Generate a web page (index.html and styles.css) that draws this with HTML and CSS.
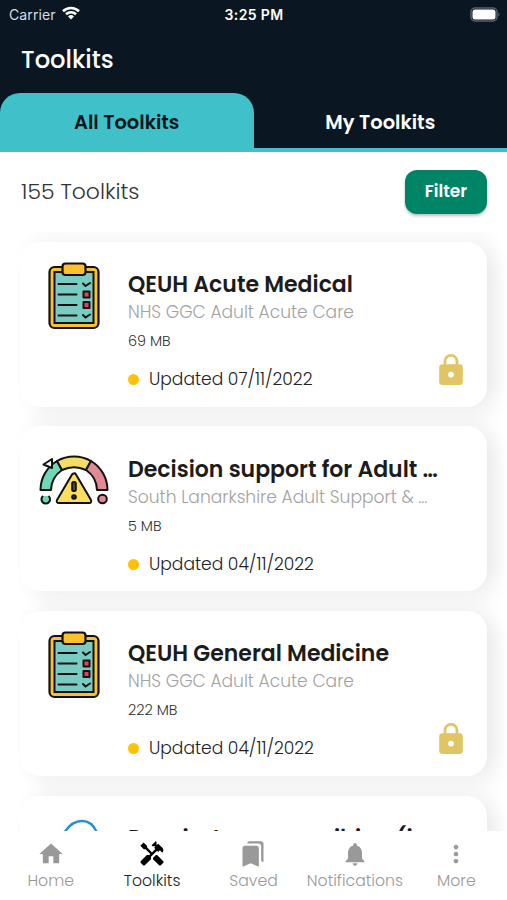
FILE: index.html
```html
<!DOCTYPE html>
<html lang="en">
<head>
    <meta charset="UTF-8">
    <meta name="viewport" content="width=device-width, initial-scale=1">
    <title>Toolkits</title>
    <link rel="stylesheet" href="styles.css">
</head>
<body>
    <!-- shared icons -->
    <svg class="symbols" width="0" height="0">
        <symbol id="clipboard" viewBox="0 0 52 68">
            <rect x="1.5" y="5" width="49" height="61" rx="5" fill="#fbc02d" stroke="#111" stroke-width="2.2"/>
            <path d="M6.5 10h39v51h-39z" fill="#7accc2" stroke="#111" stroke-width="2"/>
            <rect x="14.5" y="1.500" width="23" height="11.500" rx="3" fill="#fbc02d" stroke="#111" stroke-width="2.2"/>
            <path d="M10.500 22h18M10.500 32.500h18M10.500 43h18M10.500 53.500h18M35 21.500l2.500 2.500 4.500-3M35 53l2.500 2.500 4.500-3" fill="none" stroke="#111" stroke-width="2" stroke-linecap="round"/>
            <path d="M35.500 29.500h6v6h-6zM35.500 40h6v6h-6z" fill="#ef3c5c" stroke="#111" stroke-width="2" stroke-linejoin="round"/>
        </symbol>
        <symbol id="lock" viewBox="4 1 16 21">
            <path fill="#e1c564" d="M18 8h-1V6c0-2.760-2.240-5-5-5S7 3.240 7 6v2H6c-1.100 0-2 .9-2 2v10c0 1.100.9 2 2 2h12c1.100 0 2-.9 2-2V10c0-1.100-.9-2-2-2zm-6 9c-1.100 0-2-.9-2-2s.9-2 2-2 2 .9 2 2-.9 2-2 2zm3.100-9H8.900V6c0-1.710 1.390-3.100 3.100-3.100s3.100 1.390 3.100 3.100v2z"/>
        </symbol>
    </svg>
    <div class="app">
        <header class="header">
            <div class="status">
                <div class="carrier">
                    <span>Carrier</span>
                    <svg width="18" height="14" viewBox="0 0 18 14" fill="none" stroke="#fff" stroke-width="2.6">
                        <path d="M1 5.200a11.500 11.500 0 0 1 16 0M4 8.300a7.200 7.200 0 0 1 10 0"/>
                        <path d="M9 13.500l-3-3a4.300 4.300 0 0 1 6 0z" fill="#fff" stroke="none"/>
                    </svg>
                </div>
                <div class="time">3:25 PM</div>
                <svg class="battery" width="31" height="15" viewBox="0 0 31 15">
                    <rect x="1" y="1" width="26" height="13" rx="4" fill="none" stroke="#59626b" stroke-width="1.5"/>
                    <rect x="2.500" y="2.500" width="23" height="10" rx="2.500" fill="#fff"/>
                    <path d="M28.500 5.500q2 2 0 4z" fill="#68717a"/>
                </svg>
            </div>
            <h1>Toolkits</h1>
            <div class="tabs">
                <div class="tab active">All Toolkits</div>
                <div class="tab">My Toolkits</div>
            </div>
        </header>
        <div class="toolbar">
            <span class="count">155 Toolkits</span>
            <button class="filter">Filter</button>
        </div>
        <main class="list">
            <div class="card">
                <svg class="pic" width="52" height="68"><use href="#clipboard"/></svg>
                <div class="info">
                    <h2>QEUH Acute Medical</h2>
                    <p class="org">NHS GGC Adult Acute Care</p>
                    <p class="size">69 MB</p>
                    <p class="updated"><span class="dot"></span>Updated 07/11/2022</p>
                </div>
                <svg class="lock" width="24" height="31"><use href="#lock"/></svg>
            </div>
            <div class="card">
                <svg class="pic gauge" width="70" height="52" viewBox="0 0 70 52">
                    <g stroke="#111" stroke-width="2" stroke-linejoin="round">
                        <path d="M1.500 35A34 34 0 0 1 18 6l5 9A25 25 0 0 0 12 35z" fill="#6fd9b5"/>
                        <path d="M18 6A35 35 0 0 1 52 6l-5 9A28 28 0 0 0 23 15z" fill="#f5dc67"/>
                        <path d="M52 6A34 34 0 0 1 68.500 35H58A25 25 0 0 0 47 15z" fill="#e28a92"/>
                        <path d="M4.500 9.500l8.500-5.500v9z" fill="#fff"/>
                        <path d="M34.800 18.500Q36 17.500 37 19.500L52 45q1 3-2 3H20q-3 0-2-3l15-25.500q1-1 1.800-1z" fill="#f9df61"/>
                        <rect x="33.200" y="27" width="3.600" height="9" rx="1.500" fill="#665a20"/>
                        <circle cx="35" cy="42" r="1.800" fill="#665a20"/>
                        <path d="M4 41a4.300 4.300 0 1 0 5.500 0" fill="#6fd9b5"/>
                        <circle cx="63.500" cy="44" r="4.300" fill="#e28a92"/>
                    </g>
                </svg>
                <div class="info">
                    <h2>Decision support for Adult …</h2>
                    <p class="org">South Lanarkshire Adult Support &amp; …</p>
                    <p class="size">5 MB</p>
                    <p class="updated"><span class="dot"></span>Updated 04/11/2022</p>
                </div>
            </div>
            <div class="card">
                <svg class="pic" width="52" height="68"><use href="#clipboard"/></svg>
                <div class="info">
                    <h2>QEUH General Medicine</h2>
                    <p class="org">NHS GGC Adult Acute Care</p>
                    <p class="size">222 MB</p>
                    <p class="updated"><span class="dot"></span>Updated 04/11/2022</p>
                </div>
                <svg class="lock" width="24" height="31"><use href="#lock"/></svg>
            </div>
            <div class="card">
                <svg class="pic" width="60" height="60" viewBox="0 0 60 60" fill="none" stroke="#2590cf" stroke-width="2.4">
                    <path d="M20 17C30 1 47 1 53 17"/>
                </svg>
                <div class="info">
                    <h2>Respiratory prescribing (in …</h2>
                </div>
            </div>
        </main>
        <nav class="nav">
            <a class="item">
                <svg viewBox="0 0 24 24"><path d="M10 20v-6h4v6h5v-8h3L12 3 2 12h3v8z"/></svg>
                <span>Home</span>
            </a>
            <a class="item current">
                <svg viewBox="0 0 24 24"><path d="M21.670 18.170l-5.300-5.300h-.99l-2.540 2.540v.99l5.300 5.300c.39.390 1.020.390 1.410 0l2.120-2.120c.39-.38.39-1.020 0-1.410z"/><path d="M17.340 10.190l1.410-1.410 2.120 2.120c1.170-1.170 1.170-3.070 0-4.240l-3.540-3.540-1.410 1.410V1.710l-.7-.71-3.540 3.540.71.710h2.830l-1.410 1.410 1.060 1.060-2.890 2.890-4.130-4.130V5.060L4.830 2.040 2 4.870l3.030 3.020h1.410l4.130 4.130-.85.850H7.600l-5.300 5.300c-.39.390-.39 1.020 0 1.410l2.120 2.120c.39.390 1.020.390 1.410 0l5.300-5.300v-2.120l5.150-5.150z"/></svg>
                <span>Toolkits</span>
            </a>
            <a class="item">
                <svg viewBox="0 0 24 24"><path d="M19 18l2 1V3c0-1.100-.9-2-2-2H8.990C7.890 1 7 1.900 7 3h10c1.100 0 2 .9 2 2zM15 5H5c-1.100 0-2 .9-2 2v16l7-3 7 3V7c0-1.100-.9-2-2-2z"/></svg>
                <span>Saved</span>
            </a>
            <a class="item">
                <svg viewBox="0 0 24 24"><path d="M12 22c1.100 0 2-.9 2-2h-4c0 1.100.890 2 2 2zm6-6v-5c0-3.070-1.640-5.640-4.500-6.320V4c0-.83-.67-1.500-1.500-1.500s-1.500.67-1.500 1.500v.68C7.630 5.360 6 7.920 6 11v5l-2 2v1h16v-1z"/></svg>
                <span>Notifications</span>
            </a>
            <a class="item">
                <svg viewBox="0 0 24 24"><path d="M12 8c1.100 0 2-.9 2-2s-.9-2-2-2-2 .9-2 2 .9 2 2 2zm0 2c-1.100 0-2 .9-2 2s.9 2 2 2 2-.9 2-2-.9-2-2-2zm0 6c-1.100 0-2 .9-2 2s.9 2 2 2 2-.9 2-2-.9-2-2-2z"/></svg>
                <span>More</span>
            </a>
        </nav>
    </div>
</body>
</html>
```
FILE: styles.css
```css
* {
    box-sizing: border-box;
}
body {
    margin: 0;
    font-family: Poppins, Inter, "Open Sans", sans-serif;
    background-color: #fff;
    color: #1c1c1c;
}
h1, h2, p {
    margin: 0;
}
.symbols {
    display: block;
}
.app {
    display: flex;
    flex-direction: column;
    height: 900px;
    overflow: hidden;
}

/* header */
.header {
    height: 152px;
    background-color: #0a1722;
    color: #fff;
    display: flex;
    flex-direction: column;
}
.status {
    height: 28px;
    padding: 0 6px 0 9px;
    display: grid;
    grid-template-columns: 1fr auto 1fr;
    align-items: center;
    font-family: Inter, sans-serif;
    font-size: 14px;
}
.carrier {
    display: flex;
    align-items: center;
    gap: 6px;
    letter-spacing: 0.1px;
    color: #d8dde1;
}
.carrier svg {
    margin-top: -2px;
}
.time {
    margin-right: 2px;
    font-weight: 600;
    letter-spacing: 0.35px;
}
.battery {
    justify-self: end;
}
h1 {
    height: 64px;
    padding-left: 21px;
    line-height: 63px;
    font-size: 24.2px;
    font-weight: 500;
}
.tabs {
    flex: 1;
    display: flex;
    border-bottom: 4px solid #40c1ca;
    margin-top: 1px;
}
.tab {
    flex: 1;
    padding-top: 4px;
    line-height: 51px;
    text-align: center;
    font-size: 19.4px;
    font-weight: 600;
}
.active {
    background-color: #40c1ca;
    color: #08151c;
    border-radius: 20px 20px 0 0;
}

/* count and filter */
.toolbar {
    height: 80px;
    padding: 0 20px 1px 21px;
    display: flex;
    align-items: center;
    justify-content: space-between;
}
.count {
    font-size: 21.9px;
    line-height: 32px;
    font-weight: 300;
    color: #333;
}
.filter {
    width: 82px;
    height: 44px;
    border: none;
    border-radius: 12px;
    padding: 0 0 2px;
    background-color: #008466;
    color: #fff;
    font-family: inherit;
    font-size: 17px;
    font-weight: 600;
    box-shadow: 0 2px 3px rgba(0, 0, 0, 0.25);
}

/* toolkit list */
.list {
    flex: 1;
    min-height: 0;
    overflow: hidden;
    padding: 9.8px 20px 0;
    display: flex;
    flex-direction: column;
    gap: 19.6px;
}
.card {
    flex: none;
    height: 165px;
    padding: 20.4px 24px 0 19px;
    border-radius: 20px;
    background-color: #fff;
    display: grid;
    grid-template-columns: 89px 1fr 24px;
    box-shadow: 10px 10px 18px rgba(0, 0, 0, 0.05), 8px -8px 18px rgba(0, 0, 0, 0.04);
}
.pic {
    justify-self: center;
    margin-left: -19px;
}
.gauge {
    margin-top: 8px;
}
.info {
    min-width: 0;
    white-space: nowrap;
}
h2 {
    height: 38px;
    line-height: 46px;
    font-size: 22px;
    font-weight: 600;
}
.org {
    height: 31px;
    line-height: 24px;
    font-size: 17.1px;
    font-weight: 300;
    color: #a2a2a2;
}
.size {
    height: 31px;
    line-height: 20px;
    font-size: 14.4px;
    font-weight: 300;
    color: #333;
}
.updated {
    display: flex;
    align-items: center;
    gap: 10px;
    line-height: 35px;
    font-size: 17.1px;
    font-weight: 300;
    color: #222;
}
.dot {
    width: 11px;
    height: 11px;
    border-radius: 50%;
    background-color: #ffc107;
}
.lock {
    align-self: end;
    margin-bottom: 21.6px;
}

/* bottom navigation */
.nav {
    height: 69px;
    padding-top: 9px;
    background-color: #fff;
    display: grid;
    grid-template-columns: repeat(5, 1fr);
}
.item {
    display: flex;
    flex-direction: column;
    align-items: center;
    font-size: 15.7px;
    font-weight: 300;
    line-height: 26px;
    color: #999;
}
.item svg {
    width: 28px;
    height: 28px;
    fill: #999;
}
.current {
    color: #222;
}
.current svg {
    fill: #000;
}
```
